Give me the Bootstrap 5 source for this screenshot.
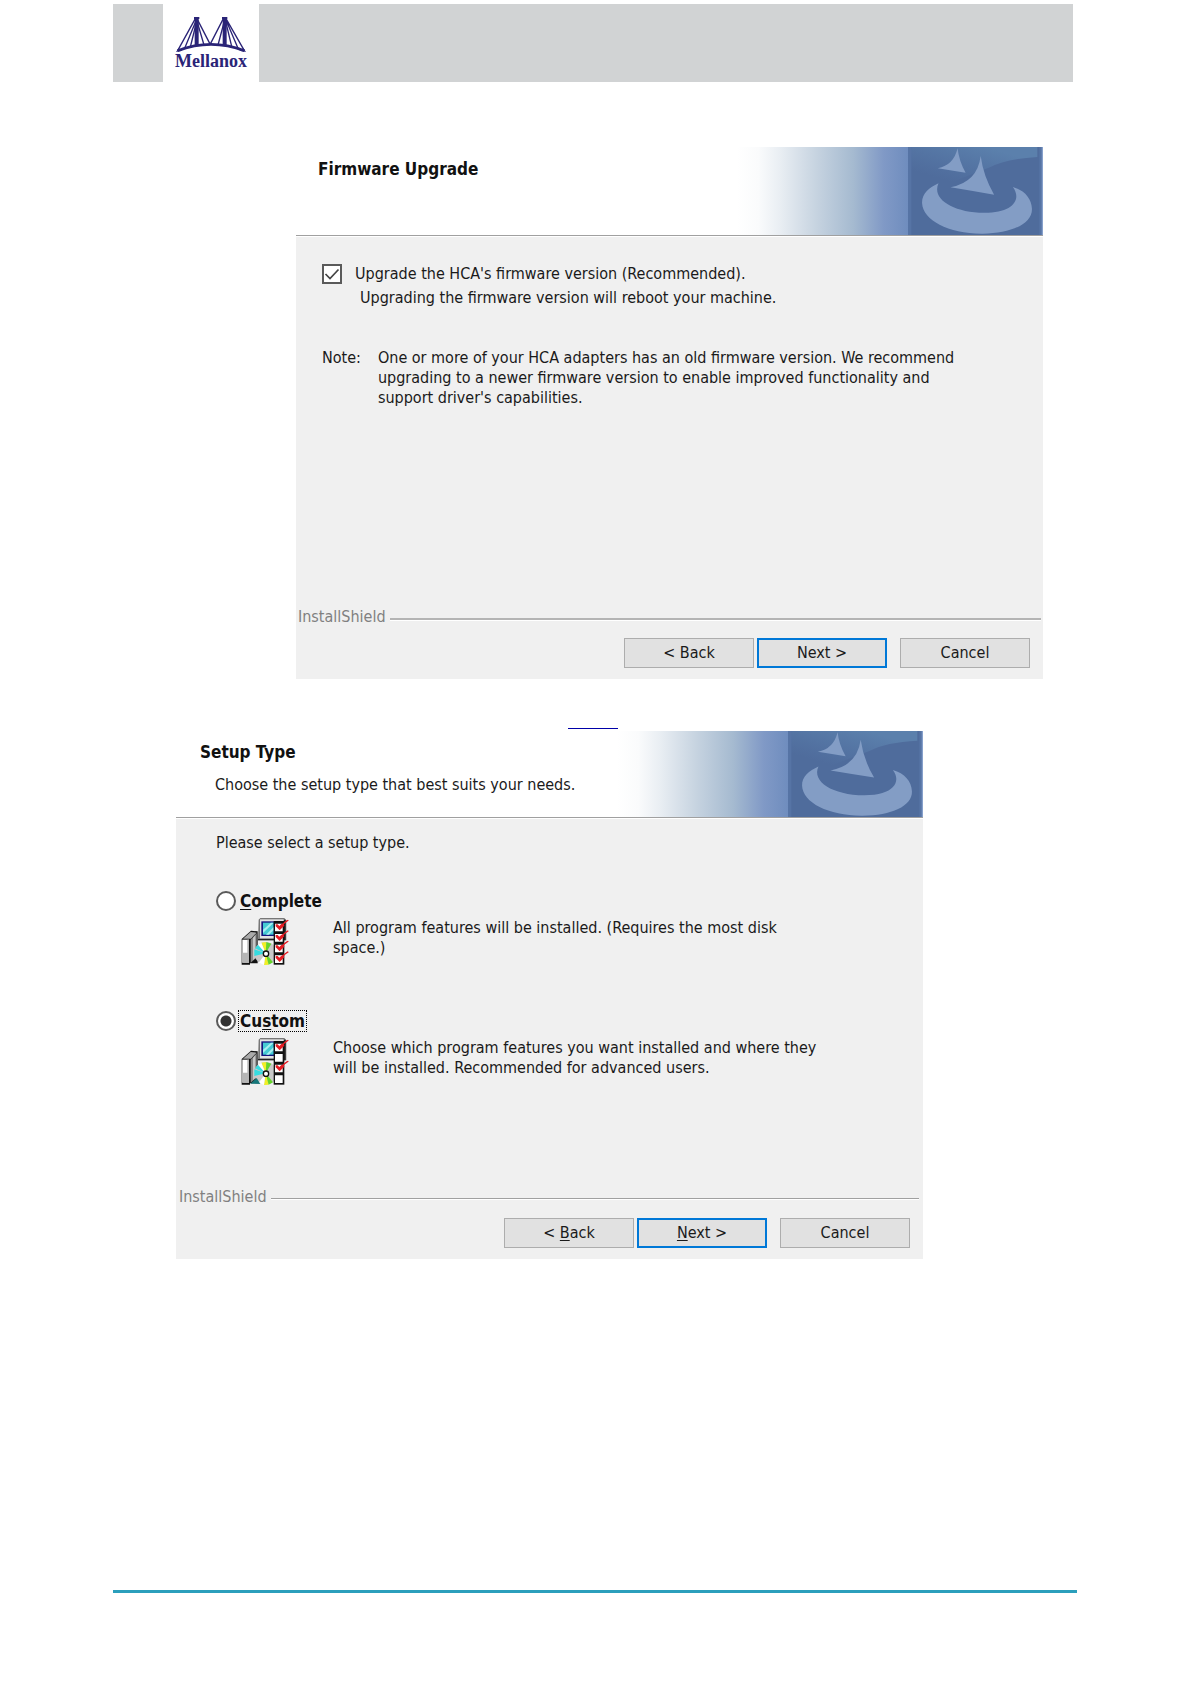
<!DOCTYPE html>
<html lang="en">
<head>
<meta charset="utf-8">
<meta name="viewport" content="width=device-width, initial-scale=1">
<title>Mellanox installation</title>
<link href="https://cdn.jsdelivr.net/npm/bootstrap@5.3.0/dist/css/bootstrap.min.css" rel="stylesheet">
<style>
body{font-family:"DejaVu Sans Condensed","DejaVu Sans",sans-serif;font-stretch:condensed;font-size:16px;line-height:20px;color:#1a1a1a;background:#fff}
.sheet{padding:4px 114px 0 113px}
.masthead{height:78px;background:#d1d3d4;margin-right:4px;padding-left:50px}
.brand-tile{width:96px;background:#fff;padding-top:13px}
.brand-name{font-family:"Liberation Serif",serif;font-weight:700;font-size:18px;line-height:14px;color:#2a2477}
.wizard{max-width:747px;background:#f0f0f0}
.wizard-first{margin:65px 0 0 183px}
.wizard-second{margin-left:63px}
.wizard-top{background:#fff;border-bottom:1px solid #a0a0a0;height:89px}
.wizard-second .wizard-top{height:87px}
.wizard-top h2{font-size:17px;line-height:20px;font-weight:700;margin:0;color:#111}
.wizard-first .heading{padding:12px 0 0 22px}
.wizard-second .heading{padding:11px 0 0 24px}
.heading p{margin:13px 0 0 15px}
.banner{width:306px;background:linear-gradient(90deg,#fff 0,#fafbfc 7%,#e9eef3 14%,#c6d3e0 26%,#a5bad0 38%,#8099c6 48%,#6f8dbe 56%)}
.banner svg{width:135px;height:100%}
.wizard-body{border-top:1px solid #fff}
.wizard-first .wizard-body{height:371px;padding:27px 26px 0}
.wizard-second .wizard-body{height:369px;padding:14px 39px 0 40px}
.wizard .form-check-input{width:20px;height:20px;margin:0;border:2px solid #5a5a5a;background-color:#fff;flex:none;box-shadow:none}
.wizard .form-check-input[type=checkbox]{border-radius:0}
.wizard .form-check-input[type=checkbox]:checked{background-image:url("data:image/svg+xml,%3Csvg xmlns='http://www.w3.org/2000/svg' viewBox='0 0 16 16'%3E%3Cpath d='M1.5 8 6 12.5 14.5 3.5' fill='none' stroke='%23444' stroke-width='1.7'/%3E%3C/svg%3E");background-size:100%}
.wizard .form-check-input[type=radio]:checked{background-image:radial-gradient(circle,#333 5px,transparent 6px)}
.check-row{gap:13px}
.check-hint{margin:4px 0 0 38px}
.note-row{margin-top:40px;gap:17px}
.choice label{font-size:17px;font-weight:700;line-height:20px;padding:0 1px;border:1px solid transparent;color:#111}
.choice .focused{border:1px dotted #000}
.choice{gap:2px}
.option{min-height:120px}
.option-first{margin-top:37px}
.option-detail{padding:6px 0 0 25px;gap:44px}
.option-detail svg{width:48px;height:49px;flex:none}
.brandline{color:#808080;gap:4px}
.brandline i{flex:1;height:3px;margin-top:4px;background:#b4b4b4;border-bottom:1px solid #fff}
.wizard-second .brandline i{height:2px;background:#a0a0a0}
.wizard-first .brandline{padding:0 2px}
.wizard-second .brandline{padding:0 4px 0 3px}
.wizard-actions{padding:11px 13px 11px 0}
.wizard-actions .btn{width:130px;height:30px;padding:0;font-size:16px;line-height:20px;border:1px solid #adadad;border-radius:0;background:#e1e1e1;color:#1a1a1a}
.wizard-actions .next{border:2px solid #0078d7;margin:0 13px 0 3px}
.link-gap{height:52px;padding:0 0 2px 455px}
.link-gap a{width:50px;height:20px;border-bottom:1px solid #0000a8}
.page-rule{height:3px;background:#2b9fbc;margin:331px 0 90px}
u{text-underline-offset:2px}
</style>
</head>
<body>
<svg class="position-absolute" width="0" height="0" aria-hidden="true">
<linearGradient id="sheen" x1="0" y1="1" x2="1" y2="0"><stop offset="0.2" stop-color="#587baa" stop-opacity="0"/><stop offset="0.8" stop-color="#5b80ac"/></linearGradient>
<symbol id="shield" viewBox="57 21 403 262" preserveAspectRatio="none">
<path fill="#4f6c9c" d="M57 21h403v262H57z"/>
<path fill="url(#sheen)" d="M66 21h377v30Q350 56 300 82L188 125 66 135z"/>
<path fill="#5674a5" d="M57 21h10v262H57zM449 21h6v262h-6z"/>
<path fill="#87a1cb" d="M456 21h4v262h-4z"/>
<path fill="#839dc5" d="M205 25Q209 62 229 98Q190 91 146 84Q193 76 205 25zM274 48Q282 108 314 163Q250 152 184 141Q264 126 274 48z"/>
<path fill="#839dc5" d="M148 129C120 142 98 160 99 188C101 240 180 280 280 279C365 278 428 250 427 205C426 175 405 150 370 140C397 176 372 217 285 217C190 216 127 175 148 129z"/>
</symbol>
<symbol id="box" viewBox="0 0 144 147">
<path fill="#111" d="M2 63 30 38 50 40V136H27V140H2z"/>
<path fill="#aaa" d="M6 62 29 42 47 44 30 62z"/>
<path fill="#fff" d="M4 65h20v69H4z"/><path fill="#b5b5b5" d="M4 104h20v30H4zM19 65h5v69h-5z"/>
<path fill="#8a8a8a" d="M29 65 47 46V118L29 134z"/><path fill="#c7c7c7" d="M36 59 43 52V120L36 127z"/>
<path fill="#777" d="M53 5 58 0H130L136 7V67H51z"/><path fill="#222" d="M128 5h6v62h-83v-4h77z"/>
<path fill="#e4e4e4" d="M57 4H128V61H57z"/>
<path fill="#14157e" d="M61 10H102V54H61z"/><path fill="#45cbd4" d="M66 14H98V50H66z"/>
<path fill="#a8eff0" d="M90 14H98L66 45V35zM98 27V36L84 50H75z"/>
<circle cx="74" cy="106" r="34" fill="#c9c9c9"/>
<path fill="#35dce0" d="M74 106 42 91 51 80zM74 106 40 114 40 94z"/>
<path fill="#f1ef25" d="M74 106 61 74 76 72zM74 106 83 140 69 141z"/>
<path fill="#65d52b" d="M74 106 76 72 91 77zM74 106 96 133 83 140z"/>
<path fill="#fff" d="M74 106 51 80 61 74zM74 106 69 141 53 134z"/>
<circle cx="75" cy="107" r="8" fill="#fff" stroke="#111" stroke-width="4"/>
<path fill="#111" d="M98 9H130V140H98z"/>
<path fill="#fff" d="M102 17h23v23h-23zM102 48h23v23h-23zM102 80h23v23h-23zM102 112h23v23h-23z"/>
</symbol>
<symbol id="tick" viewBox="0 0 44 32"><path d="M4 14h6l5 5 6-6h7l2 5-14 14-12-12z" fill="#e51c23"/><path d="M15 24 32 8 42 1" fill="none" stroke="#e51c23" stroke-width="4"/></symbol>
</svg>
<main class="sheet">
<header class="masthead d-flex">
<div class="brand-tile d-flex flex-column align-items-center">
<svg width="70" height="37" viewBox="0 0 210 111" fill="none" stroke="#2a2477" aria-hidden="true">
<path d="M5 101Q105 63 205 101" stroke-width="8"/>
<path d="M62 5V87M146 5V87" stroke-width="12"/>
<path d="M58 5 5 101M62 7 26 94M63 9 43 90M62 9 84 84M64 7 103 83M142 5 102 83M146 9 126 84M148 9 167 88M149 7 186 94M150 5 205 101" stroke-width="4"/>
<path d="M54 3h16M138 3h16" stroke-width="6"/>
<path d="M0 105 8 93 19 101zM210 105 202 93 190 101z" fill="#2a2477" stroke="none"/>
</svg>
<span class="brand-name">Mellanox</span>
</div>
</header>

<section class="wizard wizard-first" aria-labelledby="fw">
<div class="wizard-top d-flex justify-content-between">
<div class="heading"><h2 id="fw">Firmware Upgrade</h2></div>
<div class="banner d-flex justify-content-end"><svg aria-hidden="true"><use href="#shield"/></svg></div>
</div>
<div class="wizard-body">
<div class="check-row d-flex align-items-center">
<input class="form-check-input" type="checkbox" id="upgrade" checked>
<label for="upgrade">Upgrade the HCA's firmware version (Recommended).</label>
</div>
<p class="check-hint">Upgrading the firmware version will reboot your machine.</p>
<div class="note-row d-flex"><span>Note:</span>
<p class="mb-0">One or more of your HCA adapters has an old firmware version. We recommend<br>upgrading to a newer firmware version to enable improved functionality and<br>support driver's capabilities.</p></div>
</div>
<div class="brandline d-flex align-items-center"><span>InstallShield</span><i></i></div>
<div class="wizard-actions d-flex justify-content-end">
<button type="button" class="btn">&lt; Back</button><button type="button" class="btn next">Next &gt;</button><button type="button" class="btn">Cancel</button>
</div>
</section>

<div class="link-gap d-flex align-items-end"><a href="#setup" aria-label="Setup"></a></div>

<section class="wizard wizard-second" id="setup" aria-labelledby="st">
<div class="wizard-top d-flex justify-content-between">
<div class="heading"><h2 id="st">Setup Type</h2><p>Choose the setup type that best suits your needs.</p></div>
<div class="banner d-flex justify-content-end"><svg aria-hidden="true"><use href="#shield"/></svg></div>
</div>
<div class="wizard-body">
<p class="mb-0">Please select a setup type.</p>
<div class="option option-first">
<div class="choice d-flex align-items-center"><input class="form-check-input" type="radio" name="kind" id="complete"><label for="complete"><u>C</u>omplete</label></div>
<div class="option-detail d-flex">
<svg viewBox="0 0 144 147" aria-hidden="true"><use href="#box" width="144" height="147"/><use href="#tick" x="100" y="5" width="44" height="32"/><use href="#tick" x="100" y="37" width="44" height="32"/><use href="#tick" x="100" y="68" width="44" height="32"/><use href="#tick" x="100" y="100" width="44" height="32"/></svg>
<p class="mb-0">All program features will be installed. (Requires the most disk<br>space.)</p></div>
</div>
<div class="option">
<div class="choice d-flex align-items-center"><input class="form-check-input" type="radio" name="kind" id="custom" checked><label for="custom" class="focused">Cu<u>s</u>tom</label></div>
<div class="option-detail d-flex">
<svg viewBox="0 0 144 147" aria-hidden="true"><use href="#box" width="144" height="147"/><path d="M28 137 47 120 58 138z" fill="#16777a"/><use href="#tick" x="100" y="5" width="44" height="32"/><use href="#tick" x="100" y="68" width="44" height="32"/></svg>
<p class="mb-0">Choose which program features you want installed and where they<br>will be installed. Recommended for advanced users.</p></div>
</div>
</div>
<div class="brandline d-flex align-items-center"><span>InstallShield</span><i></i></div>
<div class="wizard-actions d-flex justify-content-end">
<button type="button" class="btn">&lt; <u>B</u>ack</button><button type="button" class="btn next"><u>N</u>ext &gt;</button><button type="button" class="btn">Cancel</button>
</div>
</section>
<footer class="page-rule"></footer>
</main>
<script src="https://cdn.jsdelivr.net/npm/bootstrap@5.3.0/dist/js/bootstrap.bundle.min.js"></script>
</body>
</html>
